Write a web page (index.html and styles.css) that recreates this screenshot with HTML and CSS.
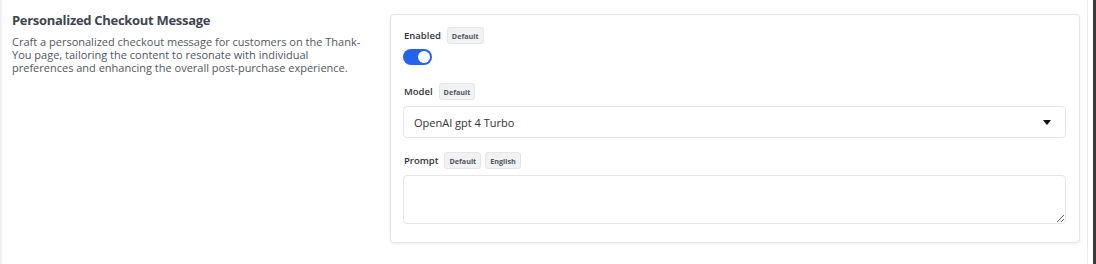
FILE: index.html
```html
<!DOCTYPE html>
<html lang="en">
<head>
<meta charset="utf-8">
<title>Personalized Checkout Message</title>
<link rel="stylesheet" href="styles.css">
</head>
<body>
<div class="page">
  <div class="main">
    <section class="section">
      <div class="intro">
        <h2 class="title">Personalized Checkout Message</h2>
        <p class="desc">Craft a personalized checkout message for customers on the Thank-You page, tailoring the content to resonate with individual preferences and enhancing the overall post-purchase experience.</p>
      </div>
      <div class="card">
        <div class="field field-enabled">
          <div class="label-row">
            <span class="label">Enabled</span>
            <span class="badge">Default</span>
          </div>
          <div class="toggle"><span class="knob"></span></div>
        </div>
        <div class="field field-model">
          <div class="label-row">
            <span class="label">Model</span>
            <span class="badge">Default</span>
          </div>
          <div class="select">
            <span class="select-text">OpenAI gpt 4 Turbo</span>
            <svg class="caret" width="8" height="5" viewBox="0 0 8 5"><path d="M0 0H8L4 5Z" fill="#111"/></svg>
          </div>
        </div>
        <div class="field field-prompt">
          <div class="label-row">
            <span class="label">Prompt</span>
            <span class="badge">Default</span>
            <span class="badge">English</span>
          </div>
          <textarea class="textarea"></textarea>
        </div>
      </div>
    </section>
  </div>
  <div class="gutter"></div>
  <div class="scrollbar"></div>
</div>
</body>
</html>
```
FILE: styles.css
```css
* { box-sizing: border-box; }
html, body { margin: 0; padding: 0; background: #fff; }
body { font-family: "Open Sans", "Noto Sans", sans-serif; color: #333; }

.page { display: flex; height: 264px; }
.main {
  flex: 1;
  border-left: 2px solid #f2f2f2;
  border-right: 1px solid #ececec;
  padding: 14px 7px 0 10px;
}
.gutter { width: 5px; background: #fff; }
.scrollbar { width: 3px; background: #3a3a3a; }

.section { display: flex; align-items: flex-start; }
.intro { width: 355px; margin-right: 23px; }
.title {
  margin: -3px 0 0 0;
  font-size: 13px;
  letter-spacing: -0.3px;
  line-height: 18px;
  font-weight: 700;
  color: #3f4550;
}
.desc {
  margin: 6px 0 0 0;
  font-size: 11px;
  line-height: 13px;
  color: #52585f;
}

.card {
  flex: 1;
  border: 1px solid #e6e6e6;
  border-radius: 4px;
  box-shadow: 0 1px 3px rgba(0,0,0,0.08);
  padding: 12px 13px 18px 12px;
  background: #fff;
}
.field-enabled { margin-bottom: 18px; }
.field-model { margin-bottom: 14px; }

.label-row { display: flex; align-items: center; height: 17px; }
.label {
  font-size: 9.5px;
  font-weight: 600;
  color: #2f333a;
  margin-right: 6px;
  padding-left: 1px;
}
.badge {
  display: inline-flex;
  align-items: center;
  height: 17px;
  padding: 0 4px;
  font-size: 7.2px;
  font-weight: 700;
  color: #50565f;
  background: #f1f2f4;
  border: 1px solid #e4e6ea;
  border-radius: 3px;
  margin-right: 4px;
}

.toggle {
  margin-top: 5px;
  width: 29px;
  height: 16px;
  border-radius: 8px;
  background: #2563eb;
  display: flex;
  align-items: center;
  justify-content: flex-end;
  padding-right: 2px;
}
.knob { width: 12px; height: 12px; border-radius: 50%; background: #fff; }

.select {
  margin-top: 6px;
  height: 32px;
  border: 1px solid #e4e6ea;
  border-radius: 4px;
  display: flex;
  align-items: center;
  justify-content: space-between;
  padding: 0 14px 0 10px;
}
.select-text { font-size: 11px; color: #333; }
.caret { display: block; }

.textarea {
  display: block;
  margin-top: 6px;
  width: 100%;
  height: 49px;
  border: 1px solid #e4e6ea;
  border-radius: 4px;
  resize: vertical;
  font-family: inherit;
  outline: none;
}
```
